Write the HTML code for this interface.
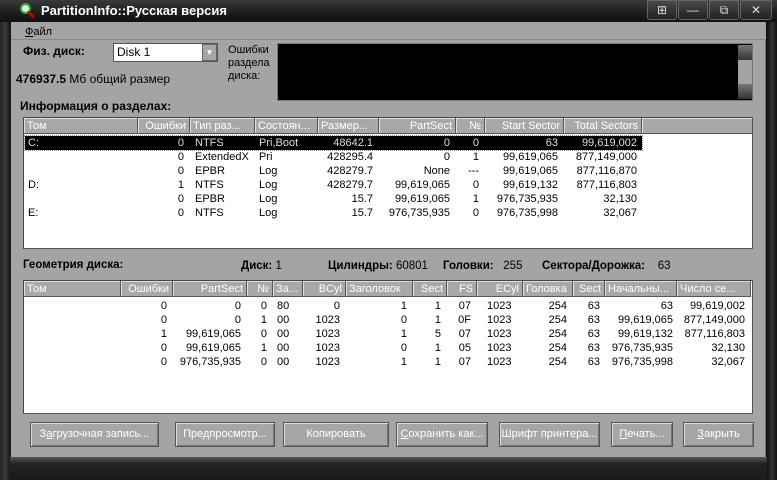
<!DOCTYPE html>
<html><head><meta charset="utf-8"><style>
*{margin:0;padding:0;box-sizing:border-box}
body{width:777px;height:480px;background:#141414;position:relative;overflow:hidden;font-family:"Liberation Sans",sans-serif;font-size:11px;color:#000}
.a{position:absolute;white-space:nowrap}
.title{left:0;top:0;width:777px;height:22px;background:linear-gradient(#3a3a3a,#1c1c1c 60%,#111);}
.client{left:11px;top:22px;width:755px;height:435px;background:#a4a4a4;border-right:1px solid #777}
.list{background:#fff;border:1px solid #555;border-top-color:#444;border-left-color:#444}
.hdr{position:absolute;top:0;height:16px;background:#a8a8a8;border-right:1px solid #555;border-bottom:1px solid #555;box-shadow:inset 1px 1px 0 #e0e0e0;color:#fff;font-size:11px;line-height:16px;padding:0 3px;overflow:hidden}
.c{position:absolute;font-size:11px;line-height:14px;white-space:nowrap}
.r{text-align:right}
.btn{position:absolute;top:422px;height:25px;background:#a6a6a6;border:1px solid #555;box-shadow:inset 1px 1px 0 #ddd,inset -1px -1px 0 #777;color:#fff;text-align:center;line-height:23px;font-size:11px}
.tb{position:absolute;top:0;width:30px;height:20px;background:linear-gradient(#4a4a4a,#202020);border:1px solid #666;border-radius:0 0 3px 3px;color:#ddd;text-align:center;font-size:12px;line-height:18px}
</style></head><body>
<div class="a title"></div>
<div class="a" style="left:0;top:22px;width:11px;height:458px;background:linear-gradient(90deg,#222,#3a3a3a,#111)"></div>
<div class="a" style="left:20px;top:3px;width:11px;height:11px;border-radius:50%;background:#dfe;border:2px solid #3a3"></div>
<div class="a" style="left:27px;top:13px;width:8px;height:3px;background:#c00;transform:rotate(45deg)"></div>
<div class="a" style="left:41px;top:3px;color:#fff;font-weight:bold;font-size:13px">PartitionInfo::Русская версия</div>
<div class="tb" style="left:647px">⊞</div>
<div class="tb" style="left:678px">—</div>
<div class="tb" style="left:709px">⧉</div>
<div class="tb" style="left:740px;width:32px">✕</div>
<div class="a client"></div>
<div class="a" style="left:11px;top:23px;width:755px;height:17px;background:#a4a4a4;border-bottom:1px solid #888"></div>
<div class="a" style="left:25px;top:26px;font-size:11px"><u>Ф</u>айл</div>
<div class="a" style="left:23px;top:44px;font-weight:bold;font-size:12px">Физ. диск:</div>
<div class="a" style="left:113px;top:43px;width:105px;height:19px;background:#fff;border:1px solid #555;font-size:12px;line-height:17px;padding-left:3px">Disk 1</div>
<div class="a" style="left:202px;top:44px;width:15px;height:17px;background:#a6a6a6;border:1px solid #666;color:#fff;font-size:8px;text-align:center;line-height:15px">▼</div>
<div class="a" style="left:16px;top:72px;font-size:12px"><b>476937.5</b> Мб общий размер</div>
<div class="a" style="left:228px;top:44px;font-size:11px;line-height:13px">Ошибки<br>раздела<br>диска:</div>
<div class="a" style="left:277px;top:43px;width:476px;height:58px;background:#000;border:1px solid #777"></div>
<div class="a" style="left:738px;top:45px;width:14px;height:15px;background:linear-gradient(#777,#333)"></div>
<div class="a" style="left:738px;top:60px;width:14px;height:24px;background:#a4a4a4"></div>
<div class="a" style="left:738px;top:84px;width:14px;height:15px;background:linear-gradient(#777,#333)"></div>
<div class="a" style="left:20px;top:99px;font-weight:bold;font-size:12px">Информация о разделах:</div>

<div class="a list" style="left:23px;top:117px;width:730px;height:132px">
<div class="hdr" style="left:0;width:114px">Том</div>
<div class="hdr r" style="left:114px;width:52px">Ошибки</div>
<div class="hdr" style="left:166px;width:65px">Тип раз...</div>
<div class="hdr" style="left:231px;width:63px">Состоян...</div>
<div class="hdr" style="left:294px;width:61px">Размер...</div>
<div class="hdr r" style="left:355px;width:77px">PartSect</div>
<div class="hdr r" style="left:432px;width:29px">№</div>
<div class="hdr r" style="left:461px;width:79px">Start Sector</div>
<div class="hdr r" style="left:540px;width:78px">Total Sectors</div>
<div class="hdr" style="left:618px;width:110px;border-right:none"></div>
<div class="a" style="left:1px;top:18px;width:617px;height:14px;background:#000;outline:1px dotted #888"></div>
</div>
<div class="a" style="left:24px;top:136px;width:730px;color:#000">
<div style="position:relative;height:14px;color:#ddd"><span class="c" style="left:4px">C:</span><span class="c r" style="left:114px;width:46px">0</span><span class="c" style="left:171px">NTFS</span><span class="c" style="left:235px">Pri,Boot</span><span class="c r" style="left:294px;width:55px">48642.1</span><span class="c r" style="left:355px;width:71px">0</span><span class="c r" style="left:432px;width:23px">0</span><span class="c r" style="left:461px;width:73px">63</span><span class="c r" style="left:540px;width:73px">99,619,002</span></div>
<div style="position:relative;height:14px"><span class="c r" style="left:114px;width:46px">0</span><span class="c" style="left:171px">ExtendedX</span><span class="c" style="left:235px">Pri</span><span class="c r" style="left:294px;width:55px">428295.4</span><span class="c r" style="left:355px;width:71px">0</span><span class="c r" style="left:432px;width:23px">1</span><span class="c r" style="left:461px;width:73px">99,619,065</span><span class="c r" style="left:540px;width:73px">877,149,000</span></div>
<div style="position:relative;height:14px"><span class="c r" style="left:114px;width:46px">0</span><span class="c" style="left:171px">EPBR</span><span class="c" style="left:235px">Log</span><span class="c r" style="left:294px;width:55px">428279.7</span><span class="c r" style="left:355px;width:71px">None</span><span class="c r" style="left:432px;width:23px">---</span><span class="c r" style="left:461px;width:73px">99,619,065</span><span class="c r" style="left:540px;width:73px">877,116,870</span></div>
<div style="position:relative;height:14px"><span class="c" style="left:4px">D:</span><span class="c r" style="left:114px;width:46px">1</span><span class="c" style="left:171px">NTFS</span><span class="c" style="left:235px">Log</span><span class="c r" style="left:294px;width:55px">428279.7</span><span class="c r" style="left:355px;width:71px">99,619,065</span><span class="c r" style="left:432px;width:23px">0</span><span class="c r" style="left:461px;width:73px">99,619,132</span><span class="c r" style="left:540px;width:73px">877,116,803</span></div>
<div style="position:relative;height:14px"><span class="c r" style="left:114px;width:46px">0</span><span class="c" style="left:171px">EPBR</span><span class="c" style="left:235px">Log</span><span class="c r" style="left:294px;width:55px">15.7</span><span class="c r" style="left:355px;width:71px">99,619,065</span><span class="c r" style="left:432px;width:23px">1</span><span class="c r" style="left:461px;width:73px">976,735,935</span><span class="c r" style="left:540px;width:73px">32,130</span></div>
<div style="position:relative;height:14px"><span class="c" style="left:4px">E:</span><span class="c r" style="left:114px;width:46px">0</span><span class="c" style="left:171px">NTFS</span><span class="c" style="left:235px">Log</span><span class="c r" style="left:294px;width:55px">15.7</span><span class="c r" style="left:355px;width:71px">976,735,935</span><span class="c r" style="left:432px;width:23px">0</span><span class="c r" style="left:461px;width:73px">976,735,998</span><span class="c r" style="left:540px;width:73px">32,067</span></div>
</div>

<div class="a" style="left:23px;top:259px;font-weight:bold;font-size:11.5px">Геометрия диска:</div>
<div class="a" style="left:241px;top:260px;font-size:11.5px"><b>Диск:</b> 1</div>
<div class="a" style="left:328px;top:260px;font-size:11.5px"><b>Цилиндры:</b> 60801</div>
<div class="a" style="left:443px;top:260px;font-size:11.5px"><b>Головки:</b>&nbsp;&nbsp; 255</div>
<div class="a" style="left:542px;top:260px;font-size:11.5px"><b>Сектора/Дорожка:</b>&nbsp;&nbsp;&nbsp; 63</div>

<div class="a list" style="left:23px;top:280px;width:730px;height:134px">
<div class="hdr" style="left:0;width:97px">Том</div>
<div class="hdr r" style="left:97px;width:52px">Ошибки</div>
<div class="hdr r" style="left:149px;width:74px">PartSect</div>
<div class="hdr r" style="left:223px;width:26px">№</div>
<div class="hdr" style="left:249px;width:30px">За...</div>
<div class="hdr r" style="left:279px;width:43px">BCyl</div>
<div class="hdr" style="left:322px;width:67px">Заголовок</div>
<div class="hdr r" style="left:389px;width:34px">Sect</div>
<div class="hdr r" style="left:423px;width:30px">FS</div>
<div class="hdr r" style="left:453px;width:46px">ECyl</div>
<div class="hdr" style="left:499px;width:50px">Головка</div>
<div class="hdr r" style="left:549px;width:32px">Sect</div>
<div class="hdr" style="left:581px;width:72px">Начальны...</div>
<div class="hdr" style="left:653px;width:74px">Число се...</div>
</div>
<div class="a" style="left:24px;top:299px;width:730px">
<div style="position:relative;height:14px"><span class="c r" style="left:97px;width:46px">0</span><span class="c r" style="left:149px;width:68px">0</span><span class="c r" style="left:223px;width:20px">0</span><span class="c" style="left:253px">80</span><span class="c r" style="left:279px;width:37px">0</span><span class="c r" style="left:322px;width:61px">1</span><span class="c r" style="left:389px;width:28px">1</span><span class="c r" style="left:423px;width:24px">07</span><span class="c" style="left:463px">1023</span><span class="c r" style="left:499px;width:44px">254</span><span class="c r" style="left:549px;width:27px">63</span><span class="c r" style="left:581px;width:68px">63</span><span class="c r" style="left:653px;width:68px">99,619,002</span></div>
<div style="position:relative;height:14px"><span class="c r" style="left:97px;width:46px">0</span><span class="c r" style="left:149px;width:68px">0</span><span class="c r" style="left:223px;width:20px">1</span><span class="c" style="left:253px">00</span><span class="c r" style="left:279px;width:37px">1023</span><span class="c r" style="left:322px;width:61px">0</span><span class="c r" style="left:389px;width:28px">1</span><span class="c r" style="left:423px;width:24px">0F</span><span class="c" style="left:463px">1023</span><span class="c r" style="left:499px;width:44px">254</span><span class="c r" style="left:549px;width:27px">63</span><span class="c r" style="left:581px;width:68px">99,619,065</span><span class="c r" style="left:653px;width:68px">877,149,000</span></div>
<div style="position:relative;height:14px"><span class="c r" style="left:97px;width:46px">1</span><span class="c r" style="left:149px;width:68px">99,619,065</span><span class="c r" style="left:223px;width:20px">0</span><span class="c" style="left:253px">00</span><span class="c r" style="left:279px;width:37px">1023</span><span class="c r" style="left:322px;width:61px">1</span><span class="c r" style="left:389px;width:28px">5</span><span class="c r" style="left:423px;width:24px">07</span><span class="c" style="left:463px">1023</span><span class="c r" style="left:499px;width:44px">254</span><span class="c r" style="left:549px;width:27px">63</span><span class="c r" style="left:581px;width:68px">99,619,132</span><span class="c r" style="left:653px;width:68px">877,116,803</span></div>
<div style="position:relative;height:14px"><span class="c r" style="left:97px;width:46px">0</span><span class="c r" style="left:149px;width:68px">99,619,065</span><span class="c r" style="left:223px;width:20px">1</span><span class="c" style="left:253px">00</span><span class="c r" style="left:279px;width:37px">1023</span><span class="c r" style="left:322px;width:61px">0</span><span class="c r" style="left:389px;width:28px">1</span><span class="c r" style="left:423px;width:24px">05</span><span class="c" style="left:463px">1023</span><span class="c r" style="left:499px;width:44px">254</span><span class="c r" style="left:549px;width:27px">63</span><span class="c r" style="left:581px;width:68px">976,735,935</span><span class="c r" style="left:653px;width:68px">32,130</span></div>
<div style="position:relative;height:14px"><span class="c r" style="left:97px;width:46px">0</span><span class="c r" style="left:149px;width:68px">976,735,935</span><span class="c r" style="left:223px;width:20px">0</span><span class="c" style="left:253px">00</span><span class="c r" style="left:279px;width:37px">1023</span><span class="c r" style="left:322px;width:61px">1</span><span class="c r" style="left:389px;width:28px">1</span><span class="c r" style="left:423px;width:24px">07</span><span class="c" style="left:463px">1023</span><span class="c r" style="left:499px;width:44px">254</span><span class="c r" style="left:549px;width:27px">63</span><span class="c r" style="left:581px;width:68px">976,735,998</span><span class="c r" style="left:653px;width:68px">32,067</span></div>
</div>

<div class="btn" style="left:30px;width:129px">З<u>а</u>грузочная запись...</div>
<div class="btn" style="left:175px;width:100px">Предпросмотр...</div>
<div class="btn" style="left:283px;width:106px">Копировать</div>
<div class="btn" style="left:396px;width:92px"><u>С</u>охранить как...</div>
<div class="btn" style="left:499px;width:101px">Шрифт принтера...</div>
<div class="btn" style="left:611px;width:62px"><u>П</u>ечать...</div>
<div class="btn" style="left:683px;width:71px"><u>З</u>акрыть</div>

<div class="a" style="left:10px;top:457px;width:767px;height:23px;background:linear-gradient(#555,#222 30%,#1a1a1a)"></div>
<div class="a" style="left:767px;top:22px;width:10px;height:458px;background:linear-gradient(90deg,#111,#333,#111)"></div>
</body></html>
